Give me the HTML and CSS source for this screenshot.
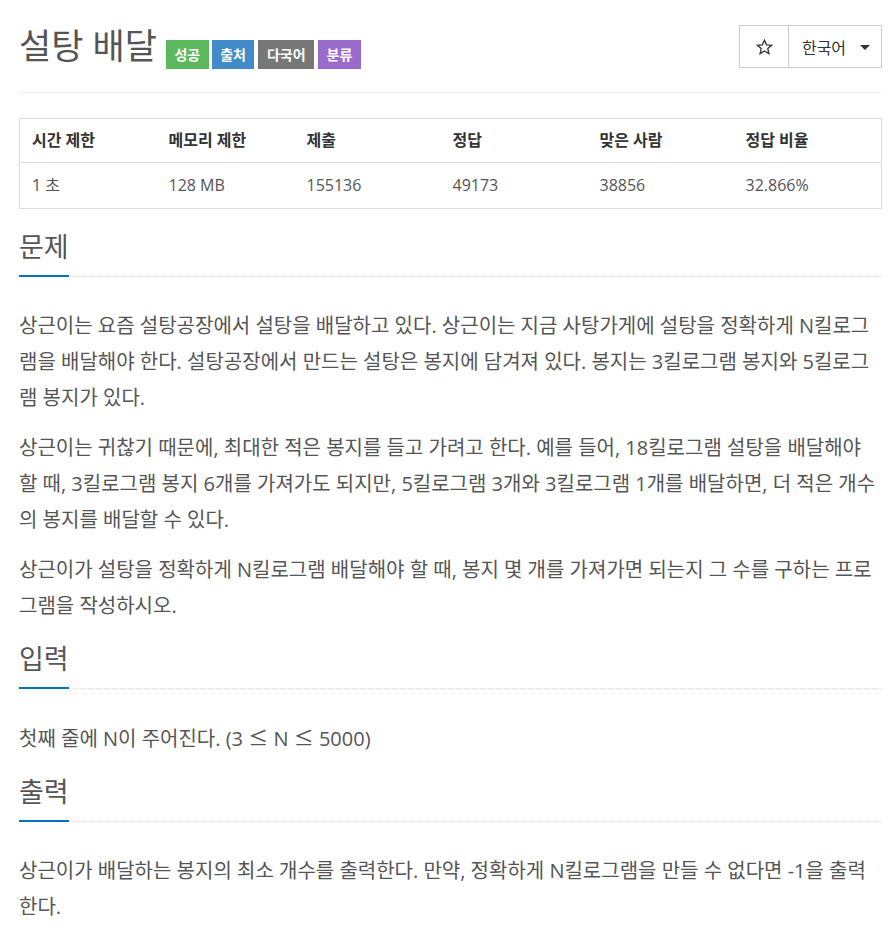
FILE: index.html
```html
<!DOCTYPE html>
<html lang="ko">
<head>
<meta charset="utf-8">
<title>설탕 배달</title>
<link rel="stylesheet" href="styles.css">
</head>
<body>
<div class="page">
  <div class="page-header">
    <h1 class="title">
      <span class="title-text">설탕 배달</span>
      <span class="label label-green">성공</span>
      <span class="label label-blue">출처</span>
      <span class="label label-gray">다국어</span>
      <span class="label label-purple">분류</span>
    </h1>
    <div class="btn-group">
      <button class="btn btn-star" type="button">
        <svg width="17" height="16" viewBox="0 0 17 16" aria-hidden="true"><polygon points="8.5,1.2 10.6,5.8 15.6,6.3 11.8,9.6 12.9,14.6 8.5,12 4.1,14.6 5.2,9.6 1.4,6.3 6.4,5.8" fill="none" stroke="#333" stroke-width="1.3" stroke-linejoin="miter"/></svg>
      </button>
      <button class="btn btn-lang" type="button">한국어 <span class="caret"></span></button>
    </div>
  </div>

  <table class="info">
    <thead>
      <tr><th>시간 제한</th><th>메모리 제한</th><th>제출</th><th>정답</th><th>맞은 사람</th><th>정답 비율</th></tr>
    </thead>
    <tbody>
      <tr><td>1 초</td><td>128 MB</td><td>155136</td><td>49173</td><td>38856</td><td>32.866%</td></tr>
    </tbody>
  </table>

  <section class="section section-first">
    <div class="headline"><h2>문제</h2></div>
    <div class="desc">
      <p>상근이는 요즘 설탕공장에서 설탕을 배달하고 있다. 상근이는 지금 사탕가게에 설탕을 정확하게 N킬로그램을 배달해야 한다. 설탕공장에서 만드는 설탕은 봉지에 담겨져 있다. 봉지는 3킬로그램 봉지와 5킬로그램 봉지가 있다.</p>
      <p>상근이는 귀찮기 때문에, 최대한 적은 봉지를 들고 가려고 한다. 예를 들어, 18킬로그램 설탕을 배달해야 할 때, 3킬로그램 봉지 6개를 가져가도 되지만, 5킬로그램 3개와 3킬로그램 1개를 배달하면, 더 적은 개수의 봉지를 배달할 수 있다.</p>
      <p>상근이가 설탕을 정확하게 N킬로그램 배달해야 할 때, 봉지 몇 개를 가져가면 되는지 그 수를 구하는 프로그램을 작성하시오.</p>
    </div>
  </section>

  <section class="section">
    <div class="headline"><h2>입력</h2></div>
    <div class="desc">
      <p>첫째 줄에 N이 주어진다. (3 <span class="sym">≤</span> N <span class="sym">≤</span> 5000)</p>
    </div>
  </section>

  <section class="section">
    <div class="headline"><h2>출력</h2></div>
    <div class="desc">
      <p>상근이가 배달하는 봉지의 최소 개수를 출력한다. 만약, 정확하게 N킬로그램을 만들 수 없다면 -1을 출력한다.</p>
    </div>
  </section>
</div>
</body>
</html>
```

FILE: styles.css
```css
html, body {
  margin: 0;
  padding: 0;
  background: #fff;
}

body {
  font-family: "Open Sans", "Noto Sans CJK KR", sans-serif;
  color: #555;
}

.page {
  width: 862px;
  margin-left: 19px;
}

.page-header {
  display: flex;
  justify-content: space-between;
  align-items: flex-start;
  border-bottom: 1px solid #eee;
  box-sizing: border-box;
  height: 93px;
}

.title {
  display: flex;
  align-items: flex-start;
  gap: 3px;
  margin: 26px 0 0 0;
  font-weight: 400;
}

.title-text {
  font-size: 35px;
  line-height: 40px;
  color: #555;
  margin-right: 6px;
}

.label {
  display: inline-block;
  margin-top: 14px;
  height: 29px;
  line-height: 29px;
  padding: 0 8.5px;
  font-size: 14px;
  font-weight: 700;
  color: #fff;
  box-sizing: border-box;
}

.label-green { background: #5cb85c; }
.label-blue { background: #428bca; }
.label-gray { background: #777; margin-left: 1px; }
.label-purple { background: #9b6bcc; margin-left: 1px; }

.btn-group {
  display: flex;
  margin-top: 25px;
  margin-right: -1px;
}

.btn {
  height: 43px;
  border: 1px solid #ccc;
  background: #fff;
  font-family: "Open Sans", "Noto Sans CJK KR", sans-serif;
  font-size: 16px;
  color: #333;
  padding: 0;
  display: flex;
  align-items: center;
  justify-content: center;
  box-sizing: border-box;
}

.btn-star {
  width: 50px;
  padding-top: 1px;
}

.btn-lang {
  width: 94px;
  margin-left: -1px;
  padding-left: 2px;
  gap: 14px;
}

.caret {
  display: inline-block;
  width: 0;
  height: 0;
  border-top: 5px solid #333;
  border-left: 5px solid transparent;
  border-right: 5px solid transparent;
  margin-top: 2px;
}

.info {
  width: 862px;
  margin-top: 25px;
  border-collapse: collapse;
  table-layout: fixed;
  border: 1px solid #ddd;
  font-size: 16px;
}

.info th,
.info td {
  box-sizing: border-box;
  text-align: left;
  padding: 11px 12px;
  line-height: 21px;
  white-space: nowrap;
}

.info th:nth-child(1) { width: 137px; }
.info th:nth-child(2) { width: 138px; }
.info th:nth-child(3) { width: 146px; }
.info th:nth-child(4) { width: 147px; }
.info th:nth-child(5) { width: 146px; }
.info th:nth-child(6) { width: 148px; }

.info th {
  color: #333;
  font-weight: 700;
  border-bottom: 1px solid #ddd;
}

.info td {
  color: #555;
  padding-top: 12px;
  padding-bottom: 12px;
}

.section {
  margin-top: 17px;
}

.section-first {
  margin-top: 20px;
}

.headline {
  display: flex;
  border-bottom: 1px dotted #ddd;
}

.headline h2 {
  margin: 0 0 -1px 0;
  font-size: 27px;
  line-height: 36px;
  font-weight: 400;
  color: #555;
  padding-bottom: 10px;
  border-bottom: 2px solid #0076c0;
}

.desc {
  padding-top: 31px;
}

.desc p {
  margin: 0 0 14px 0;
  font-size: 20px;
  line-height: 36px;
}

.desc p:last-child {
  margin-bottom: 0;
}

.sym {
  font-family: "Noto Sans CJK KR", sans-serif;
}
```
